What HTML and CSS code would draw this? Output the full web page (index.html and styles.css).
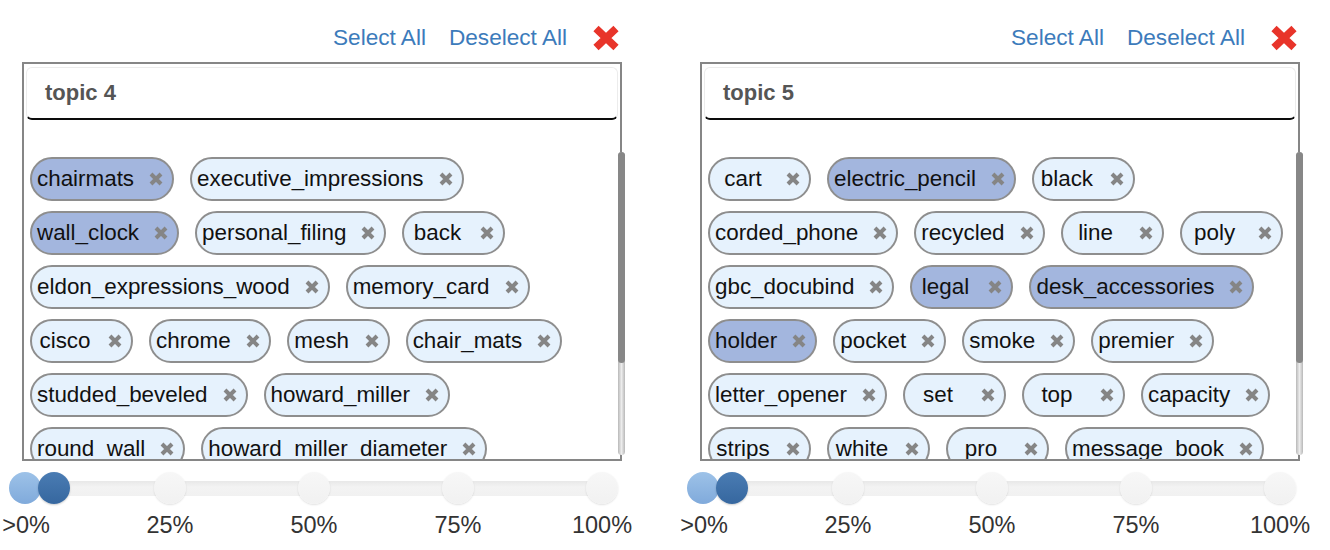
FILE: index.html
```html
<!DOCTYPE html>
<html>
<head>
<meta charset="utf-8">
<link rel="stylesheet" href="styles.css">
</head>
<body>
<div class="page">
  <section class="panel">
    <div class="toolbar">
      <a class="link">Select All</a>
      <a class="link">Deselect All</a>
      <svg class="close" width="28" height="26" viewBox="0 0 28 26"><path d="M4 3.5 L24 22.5 M24 3.5 L4 22.5" stroke="#e8342a" stroke-width="7.5"/></svg>
    </div>
    <div class="box">
      <div class="topic">topic 4</div>
      <div class="tags">
        <span class="tag on"><span class="lbl">chairmats</span><svg class="x" viewBox="0 0 14 14"><path d="M2 2 L12 12 M12 2 L2 12"/></svg></span>
        <span class="tag"><span class="lbl">executive_impressions</span><svg class="x" viewBox="0 0 14 14"><path d="M2 2 L12 12 M12 2 L2 12"/></svg></span>
        <span class="tag on"><span class="lbl">wall_clock</span><svg class="x" viewBox="0 0 14 14"><path d="M2 2 L12 12 M12 2 L2 12"/></svg></span>
        <span class="tag"><span class="lbl">personal_filing</span><svg class="x" viewBox="0 0 14 14"><path d="M2 2 L12 12 M12 2 L2 12"/></svg></span>
        <span class="tag"><span class="lbl">back</span><svg class="x" viewBox="0 0 14 14"><path d="M2 2 L12 12 M12 2 L2 12"/></svg></span>
        <span class="tag"><span class="lbl">eldon_expressions_wood</span><svg class="x" viewBox="0 0 14 14"><path d="M2 2 L12 12 M12 2 L2 12"/></svg></span>
        <span class="tag"><span class="lbl">memory_card</span><svg class="x" viewBox="0 0 14 14"><path d="M2 2 L12 12 M12 2 L2 12"/></svg></span>
        <span class="tag"><span class="lbl">cisco</span><svg class="x" viewBox="0 0 14 14"><path d="M2 2 L12 12 M12 2 L2 12"/></svg></span>
        <span class="tag"><span class="lbl">chrome</span><svg class="x" viewBox="0 0 14 14"><path d="M2 2 L12 12 M12 2 L2 12"/></svg></span>
        <span class="tag"><span class="lbl">mesh</span><svg class="x" viewBox="0 0 14 14"><path d="M2 2 L12 12 M12 2 L2 12"/></svg></span>
        <span class="tag"><span class="lbl">chair_mats</span><svg class="x" viewBox="0 0 14 14"><path d="M2 2 L12 12 M12 2 L2 12"/></svg></span>
        <span class="tag"><span class="lbl">studded_beveled</span><svg class="x" viewBox="0 0 14 14"><path d="M2 2 L12 12 M12 2 L2 12"/></svg></span>
        <span class="tag"><span class="lbl">howard_miller</span><svg class="x" viewBox="0 0 14 14"><path d="M2 2 L12 12 M12 2 L2 12"/></svg></span>
        <span class="tag"><span class="lbl">round_wall</span><svg class="x" viewBox="0 0 14 14"><path d="M2 2 L12 12 M12 2 L2 12"/></svg></span>
        <span class="tag"><span class="lbl">howard_miller_diameter</span><svg class="x" viewBox="0 0 14 14"><path d="M2 2 L12 12 M12 2 L2 12"/></svg></span>
        <span class="tag"><span class="lbl">partition</span><svg class="x" viewBox="0 0 14 14"><path d="M2 2 L12 12 M12 2 L2 12"/></svg></span>
      </div>
      <div class="scrollbar"><div class="thumb"></div></div>
    </div>
    <div class="slider">
      <div class="knobs">
        <span class="dot first"><span class="handle light"></span><span class="handle dark"></span></span>
        <span class="dot"></span>
        <span class="dot"></span>
        <span class="dot"></span>
        <span class="dot"></span>
      </div>
      <div class="labels">
        <span class="lab"><span>&gt;0%</span></span>
        <span class="lab"><span>25%</span></span>
        <span class="lab"><span>50%</span></span>
        <span class="lab"><span>75%</span></span>
        <span class="lab"><span>100%</span></span>
      </div>
    </div>
  </section>

  <section class="panel">
    <div class="toolbar">
      <a class="link">Select All</a>
      <a class="link">Deselect All</a>
      <svg class="close" width="28" height="26" viewBox="0 0 28 26"><path d="M4 3.5 L24 22.5 M24 3.5 L4 22.5" stroke="#e8342a" stroke-width="7.5"/></svg>
    </div>
    <div class="box">
      <div class="topic">topic 5</div>
      <div class="tags">
        <span class="tag"><span class="lbl">cart</span><svg class="x" viewBox="0 0 14 14"><path d="M2 2 L12 12 M12 2 L2 12"/></svg></span>
        <span class="tag on"><span class="lbl">electric_pencil</span><svg class="x" viewBox="0 0 14 14"><path d="M2 2 L12 12 M12 2 L2 12"/></svg></span>
        <span class="tag"><span class="lbl">black</span><svg class="x" viewBox="0 0 14 14"><path d="M2 2 L12 12 M12 2 L2 12"/></svg></span>
        <span class="tag"><span class="lbl">corded_phone</span><svg class="x" viewBox="0 0 14 14"><path d="M2 2 L12 12 M12 2 L2 12"/></svg></span>
        <span class="tag"><span class="lbl">recycled</span><svg class="x" viewBox="0 0 14 14"><path d="M2 2 L12 12 M12 2 L2 12"/></svg></span>
        <span class="tag"><span class="lbl">line</span><svg class="x" viewBox="0 0 14 14"><path d="M2 2 L12 12 M12 2 L2 12"/></svg></span>
        <span class="tag"><span class="lbl">poly</span><svg class="x" viewBox="0 0 14 14"><path d="M2 2 L12 12 M12 2 L2 12"/></svg></span>
        <span class="tag"><span class="lbl">gbc_docubind</span><svg class="x" viewBox="0 0 14 14"><path d="M2 2 L12 12 M12 2 L2 12"/></svg></span>
        <span class="tag on"><span class="lbl">legal</span><svg class="x" viewBox="0 0 14 14"><path d="M2 2 L12 12 M12 2 L2 12"/></svg></span>
        <span class="tag on"><span class="lbl">desk_accessories</span><svg class="x" viewBox="0 0 14 14"><path d="M2 2 L12 12 M12 2 L2 12"/></svg></span>
        <span class="tag on"><span class="lbl">holder</span><svg class="x" viewBox="0 0 14 14"><path d="M2 2 L12 12 M12 2 L2 12"/></svg></span>
        <span class="tag"><span class="lbl">pocket</span><svg class="x" viewBox="0 0 14 14"><path d="M2 2 L12 12 M12 2 L2 12"/></svg></span>
        <span class="tag"><span class="lbl">smoke</span><svg class="x" viewBox="0 0 14 14"><path d="M2 2 L12 12 M12 2 L2 12"/></svg></span>
        <span class="tag"><span class="lbl">premier</span><svg class="x" viewBox="0 0 14 14"><path d="M2 2 L12 12 M12 2 L2 12"/></svg></span>
        <span class="tag"><span class="lbl">letter_opener</span><svg class="x" viewBox="0 0 14 14"><path d="M2 2 L12 12 M12 2 L2 12"/></svg></span>
        <span class="tag"><span class="lbl">set</span><svg class="x" viewBox="0 0 14 14"><path d="M2 2 L12 12 M12 2 L2 12"/></svg></span>
        <span class="tag"><span class="lbl">top</span><svg class="x" viewBox="0 0 14 14"><path d="M2 2 L12 12 M12 2 L2 12"/></svg></span>
        <span class="tag"><span class="lbl">capacity</span><svg class="x" viewBox="0 0 14 14"><path d="M2 2 L12 12 M12 2 L2 12"/></svg></span>
        <span class="tag"><span class="lbl">strips</span><svg class="x" viewBox="0 0 14 14"><path d="M2 2 L12 12 M12 2 L2 12"/></svg></span>
        <span class="tag"><span class="lbl">white</span><svg class="x" viewBox="0 0 14 14"><path d="M2 2 L12 12 M12 2 L2 12"/></svg></span>
        <span class="tag"><span class="lbl">pro</span><svg class="x" viewBox="0 0 14 14"><path d="M2 2 L12 12 M12 2 L2 12"/></svg></span>
        <span class="tag"><span class="lbl">message_book</span><svg class="x" viewBox="0 0 14 14"><path d="M2 2 L12 12 M12 2 L2 12"/></svg></span>
      </div>
      <div class="scrollbar"><div class="thumb"></div></div>
    </div>
    <div class="slider">
      <div class="knobs">
        <span class="dot first"><span class="handle light"></span><span class="handle dark"></span></span>
        <span class="dot"></span>
        <span class="dot"></span>
        <span class="dot"></span>
        <span class="dot"></span>
      </div>
      <div class="labels">
        <span class="lab"><span>&gt;0%</span></span>
        <span class="lab"><span>25%</span></span>
        <span class="lab"><span>50%</span></span>
        <span class="lab"><span>75%</span></span>
        <span class="lab"><span>100%</span></span>
      </div>
    </div>
  </section>
</div>
</body>
</html>
```

FILE: styles.css
```css
html, body {
  margin: 0;
  padding: 0;
  background: #fff;
  overflow: hidden;
}
body {
  font-family: "Liberation Sans", Arial, sans-serif;
  font-size: 22px;
  color: #111;
}
.page {
  display: flex;
  gap: 56px;
  width: 1330px;
  height: 550px;
}
.panel {
  width: 600px;
  padding-left: 22px;
  flex: none;
}
.toolbar {
  height: 48px;
  padding-top: 14px;
  padding-right: 2px;
  display: flex;
  align-items: center;
  justify-content: flex-end;
}
.link {
  color: #3c7bbb;
  font-size: 22.6px;
  line-height: 24px;
  margin-right: 23px;
  cursor: pointer;
}
.link + .link {
  margin-right: 25px;
}
.close {
  display: block;
}
.box {
  position: relative;
  box-sizing: border-box;
  width: 600px;
  height: 399px;
  border: 2px solid #868686;
  display: flex;
  flex-direction: column;
}
.topic {
  flex: none;
  margin: 3px 2px 0 2px;
  height: 50px;
  border: 1px solid #ececec;
  border-bottom: 2px solid #0c0c0c;
  border-radius: 6px;
  padding-left: 18px;
  display: flex;
  align-items: center;
  font-weight: bold;
  color: #555;
}
.tags {
  flex: 1;
  min-height: 0;
  overflow: hidden;
  padding: 37px 6px 0 6px;
  display: flex;
  flex-wrap: wrap;
  align-content: flex-start;
  column-gap: 16px;
  row-gap: 10px;
}
.tag {
  box-sizing: border-box;
  height: 44px;
  min-width: 103px;
  padding: 0 9px 0 5px;
  border: 2px solid #8e8e8e;
  border-radius: 22px;
  background: #e6f2fd;
  display: flex;
  align-items: center;
}
.tag.on {
  background: #a3b6de;
}
.lbl {
  flex: 1;
  text-align: center;
  white-space: nowrap;
  color: #111;
  font-size: 22.4px;
}
.x {
  width: 14px;
  height: 14px;
  margin-left: 15px;
  flex: none;
}
.x path {
  stroke: #858585;
  stroke-width: 4;
  fill: none;
}
.scrollbar {
  position: absolute;
  right: -5px;
  top: 88px;
  bottom: 4px;
  width: 7px;
  border-radius: 4px;
  background: linear-gradient(to right, #b8b8b8, #ececec 50%, #b8b8b8);
}
.thumb {
  height: 211px;
  border-radius: 4px;
  background: #878787;
}
.slider {
  margin-left: -12px;
  width: 608px;
}
.knobs {
  margin-top: 11px;
  height: 32px;
  display: flex;
  justify-content: space-between;
  background: linear-gradient(#e8e8e8, #f3f3f3 40%, #f1f1f1) no-repeat 0 9px / 600px 15px;
}
.dot {
  position: relative;
  width: 32px;
  height: 32px;
  border-radius: 50%;
  background: linear-gradient(#f7f7f7, #f1f1f1);
  box-shadow: 0 1px 2px rgba(0, 0, 0, 0.12);
}
.dot.first {
  background: none;
  box-shadow: none;
}
.handle {
  position: absolute;
  top: 0;
  width: 32px;
  height: 32px;
  border-radius: 50%;
}
.handle.light {
  left: -1px;
  background: linear-gradient(#9dc2e8, #80aadb);
}
.handle.dark {
  left: 28px;
  background: linear-gradient(#4a7cb3, #36679f);
  box-shadow: 0 1px 2px rgba(0, 0, 0, 0.2);
}
.labels {
  margin-top: 8px;
  display: flex;
  justify-content: space-between;
  color: #333;
  font-size: 23.5px;
}
.lab {
  width: 32px;
  display: flex;
  justify-content: center;
  white-space: nowrap;
  line-height: 26px;
}
```
